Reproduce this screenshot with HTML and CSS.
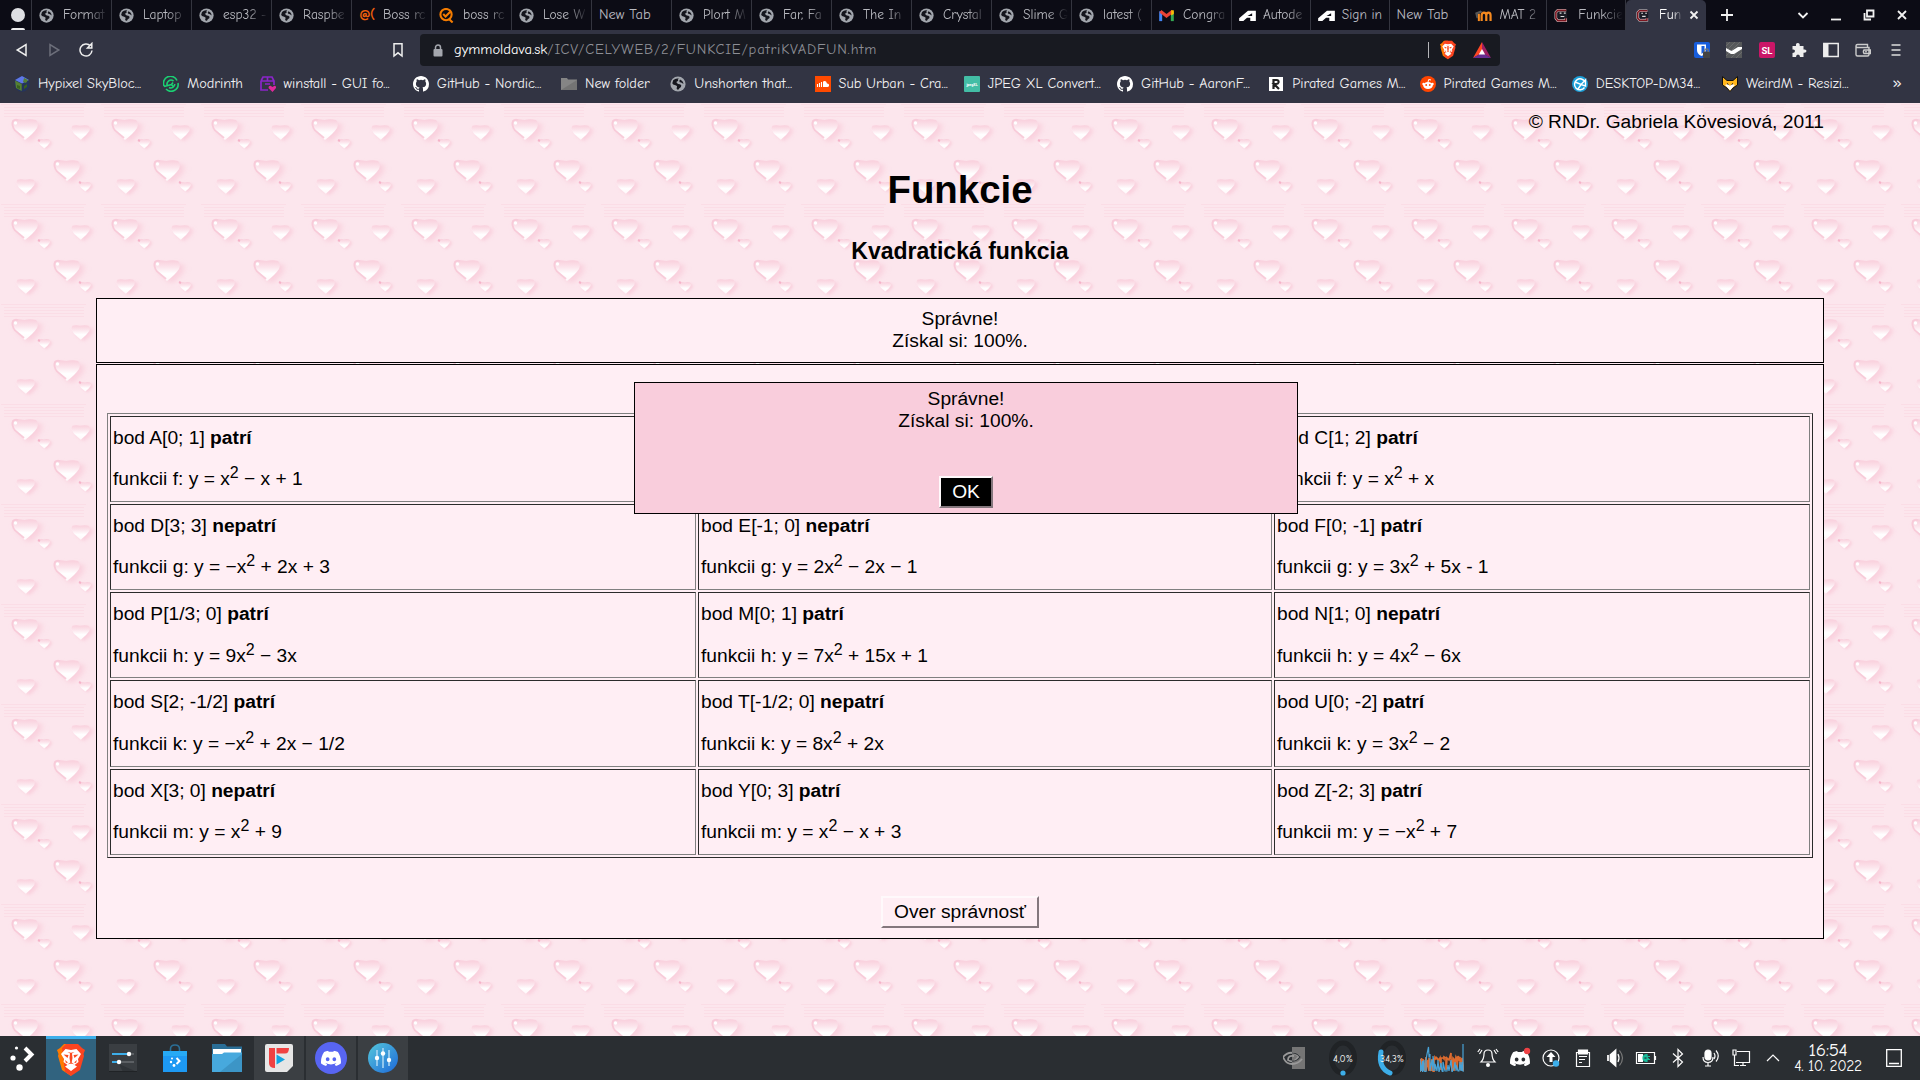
FILE: index.html
```html
<!DOCTYPE html>
<html lang="sk">
<head>
<meta charset="utf-8">
<title>Funkcie</title>
<link rel="stylesheet" href="styles.css">
</head>
<body>
<svg class="defs" width="0" height="0" aria-hidden="true">
  <symbol id="globe" viewBox="0 0 16 16"><circle cx="8" cy="8" r="7.600" fill="#a2a6ad"/><path d="M3.200 4.200Q5.500 2 8.800 2.600Q7 4 8.300 5Q6 5.200 6.800 7Q8.500 8.500 10 8.300Q12 9 11 11Q9 12 8.500 13.600Q6.800 14 6.500 12Q8 10 5.500 9.200Q2.500 8.600 2.300 7.200Z" fill="#15161e"/><path d="M10 3.400Q13.500 5 13.400 8Q11.500 6 9.800 6.200Q8.700 5 10 3.400Z" fill="#15161e"/></symbol>
  <symbol id="github" viewBox="0 0 16 16"><path fill="#fff" d="M8 0C3.580 0 0 3.580 0 8c0 3.540 2.290 6.530 5.470 7.590.4.070.55-.17.55-.38 0-.19-.01-.82-.01-1.490-2.010.37-2.530-.49-2.690-.94-.09-.23-.48-.94-.82-1.130-.28-.15-.68-.52-.01-.53.63-.01 1.080.58 1.230.82.72 1.210 1.870.87 2.330.66.070-.52.28-.87.51-1.070-1.780-.2-3.640-.89-3.640-3.950 0-.87.31-1.590.82-2.150-.08-.2-.36-1.020.08-2.120 0 0 .67-.21 2.200.82a7.600 7.600 0 0 1 4 0c1.530-1.040 2.200-.82 2.200-.82.44 1.100.16 1.920.08 2.120.51.56.82 1.270.82 2.150 0 3.070-1.870 3.750-3.650 3.950.29.25.54.73.54 1.480 0 1.070-.01 1.930-.01 2.200 0 .21.15.46.55.38A8.010 8.010 0 0 0 16 8c0-4.420-3.580-8-8-8z"/></symbol>
  <symbol id="autodesk" viewBox="0 0 18 14"><path fill="#fff" d="M0 13V10L9.500 2H18V13H12V9.500H8.500L4.500 13ZM9 7.500H14V4.500Z" fill-rule="evenodd"/></symbol>
  <symbol id="gym" viewBox="0 0 16 16"><path d="M13 2.500H4L2 4.500V11L4 13.500H12.500V10.500" fill="none" stroke="#d9cfcf" stroke-width="2.800"/><path d="M13 2.500H4L2 4.500V11L4 13.500H12.500V10.500" fill="none" stroke="#7c1620" stroke-width="1.700"/><rect x="4.500" y="4" width="9.500" height="7" fill="#1b1b24"/><path d="M6 5.500h2M10.500 5.500h2M7 9h4" stroke="#ddd" stroke-width="1.200"/></symbol>
  <symbol id="lion" viewBox="0 0 28 32"><path fill="#ff7a00" d="M7 0H14V32L5 26L1 12L1.500 10L0 6L3 4Z"/><path fill="#fb4420" d="M9 0H21L25 4L28 6L26.500 10L27 12L23 26L14 32L8 27.700L5 4Z"/><path fill="#fff" d="M8.500 5L14 6L19.500 5L24 10L21 15L21.500 18L17.500 21L20 22.500L14 27L8 22.500L10.500 21L6.500 18L7 15L4 10Z"/><path fill="#fb4a20" d="M6.500 10.500L11.500 11L10.500 14ZM21.500 10.500L16.500 11L17.500 14ZM10.500 8L13 9.500L12.500 14L13.300 18.500L10.500 20.500L12.800 19.700H15.200L17.500 20.500L14.700 18.500L15.500 14L15 9.500L17.500 8L14 8.800ZM8 16L11 18.500L9 19ZM20 16L17 18.500L19 19Z"/></symbol>
  <symbol id="discord" viewBox="0 0 24 18"><path fill="#fff" d="M20.300 1.500A20 20 0 0 0 15.400 0l-.6 1.300a18 18 0 0 0-5.600 0L8.600 0a20 20 0 0 0-4.900 1.500C.5 6.200-.3 10.800.1 15.300A20 20 0 0 0 6.100 18.300l1.300-2-2-.9.500-.4c3.900 1.800 8.200 1.800 12.100 0l.5.4-2 .9 1.300 2a20 20 0 0 0 6-3C24.400 10 23 5.500 20.300 1.500ZM8 12.500c-1.200 0-2.200-1.100-2.200-2.400S6.800 7.700 8 7.700s2.200 1.100 2.200 2.400-1 2.400-2.200 2.400Zm8 0c-1.200 0-2.200-1.100-2.200-2.400s1-2.400 2.200-2.400 2.200 1.100 2.200 2.400-1 2.400-2.200 2.400Z"/></symbol>
</svg>

<header class="browser">
  <nav class="tabs">
    <div class="pinned"><i></i><b></b></div>
    <div class="tab"><svg><use href="#globe"/></svg><span>Format</span></div>
    <div class="tab"><svg><use href="#globe"/></svg><span>Laptop</span></div>
    <div class="tab"><svg><use href="#globe"/></svg><span>esp32 -</span></div>
    <div class="tab"><svg><use href="#globe"/></svg><span>Raspbe</span></div>
    <div class="tab"><em>@(</em><span>Boss rc</span></div>
    <div class="tab"><svg viewBox="0 0 16 16"><circle cx="7.500" cy="7" r="6" fill="none" stroke="#f57c00" stroke-width="2.200"/><path d="M4.500 6.500L7 9L12 4M11 12L14.500 15.500" fill="none" stroke="#f57c00" stroke-width="2.200"/></svg><span>boss rc</span></div>
    <div class="tab"><svg><use href="#globe"/></svg><span>Lose W</span></div>
    <div class="tab plain"><span>New Tab</span></div>
    <div class="tab"><svg><use href="#globe"/></svg><span>Plort M</span></div>
    <div class="tab"><svg><use href="#globe"/></svg><span>Far, Fa</span></div>
    <div class="tab"><svg><use href="#globe"/></svg><span>The In</span></div>
    <div class="tab"><svg><use href="#globe"/></svg><span>Crystal</span></div>
    <div class="tab"><svg><use href="#globe"/></svg><span>Slime G</span></div>
    <div class="tab"><svg><use href="#globe"/></svg><span>latest (</span></div>
    <div class="tab"><svg viewBox="0 0 16 16"><path d="M1.800 14V3.500" stroke="#4285f4" stroke-width="3.200"/><path d="M14.200 14V3.500" stroke="#34a853" stroke-width="3.200"/><path d="M1.500 3.500L8 8.500L14.500 3.500" fill="none" stroke="#ea4335" stroke-width="3.400"/><path d="M13 2.500h2.800v4L13 8z" fill="#fbbc04"/></svg><span>Congra</span></div>
    <div class="tab narrow"><svg class="wide"><use href="#autodesk"/></svg><span>Autode</span></div>
    <div class="tab narrow"><svg class="wide"><use href="#autodesk"/></svg><span class="full">Sign in</span></div>
    <div class="tab narrow plain"><span>New Tab</span></div>
    <div class="tab narrow"><svg class="wide" viewBox="0 0 18 14"><path d="M7 13V7Q7 4 9.500 4T12 7V13M12 7Q12 4 14.300 4T16.600 7V13" fill="none" stroke="#f68a1f" stroke-width="2.400"/><path d="M4 13V5" fill="none" stroke="#f68a1f" stroke-width="2.200"/><path d="M0 4L6 1.500L8 3.500L3 5.500V10H1.500Z" fill="#555"/></svg><span>MAT 2</span></div>
    <div class="tab narrow"><svg><use href="#gym"/></svg><span>Funkcie</span></div>
    <div class="tab active"><svg><use href="#gym"/></svg><span>Fun</span><svg class="close" viewBox="0 0 10 10"><path d="M1.500 1.500L8.500 8.500M8.500 1.500L1.500 8.500"/></svg></div>
    <svg class="plus" viewBox="0 0 12 12"><path d="M6 0V12M0 6H12"/></svg>
    <div class="wincontrols">
      <svg viewBox="0 0 12 12"><path d="M1.500 4L6 8.500L10.500 4"/></svg>
      <svg viewBox="0 0 12 12"><path d="M1 10.500H11"/></svg>
      <svg viewBox="0 0 12 12"><path d="M4 1.500H10.500V7.500H4ZM1.500 4V10.500H8"/></svg>
      <svg viewBox="0 0 12 12"><path d="M2 2L10 10M10 2L2 10"/></svg>
    </div>
  </nav>

  <div class="toolbar">
    <div class="navbtns">
      <svg viewBox="0 0 16 16"><path d="M12 2.500V13.500L3.200 8Z"/></svg>
      <svg class="dim" viewBox="0 0 16 16"><path d="M4 2.500V13.500L12.800 8Z"/></svg>
      <svg viewBox="0 0 16 16"><path d="M12.500 4A6 6 0 1 0 14 8.500M13.800 1.500V6H9.500Z"/></svg>
    </div>
    <svg class="mark" viewBox="0 0 16 16"><path d="M4 1.800H12V14L8 10.800L4 14Z"/></svg>
    <div class="url">
      <svg class="lock" viewBox="0 0 10 13"><path d="M2.500 6V3.500a2.500 2.500 0 0 1 5 0V6" fill="none" stroke="#a4a7ae" stroke-width="1.500"/><rect x=".5" y="5" width="9" height="7.500" rx="1" fill="#a4a7ae"/></svg>
      <p class="address"><b>gymmoldava.sk</b><span>/ICV/CELYWEB/2/FUNKCIE/patriKVADFUN.htm</span></p>
      <i class="bar"></i>
      <svg class="shield"><use href="#lion"/></svg>
      <svg class="bat" viewBox="0 0 18 16"><path d="M9 0L0 16L9 11Z" fill="#ff4724"/><path d="M9 0L18 16L9 11Z" fill="#9e1f63"/><path d="M0 16H18L9 10.500Z" fill="#662d91"/><path d="M9 7L5.800 12.500H12.200Z" fill="#fff"/></svg>
    </div>
    <div class="ext">
      <svg viewBox="0 0 16 16"><rect width="16" height="16" rx="2" fill="#175ddc"/><path d="M3 2.500H12V8Q12 12 7.500 14Q3 12 3 8Z" fill="#fff"/><path d="M7.500 4H10.500V8Q10.500 10.500 7.500 12Z" fill="#175ddc"/><rect x="9" y="9.500" width="7" height="6.500" rx="1" fill="#444"/><path d="M10.800 10V8.500a1.700 1.700 0 0 1 3.400 0V10" fill="none" stroke="#777" stroke-width="1.300"/></svg>
      <svg viewBox="0 0 16 16"><rect width="16" height="16" fill="#56585a"/><path d="M0 4L4 0M0 9L9 0M0 14L14 0M5 16L16 5M10 16L16 10" stroke="#6a6b6c"/><path d="M0 6L5.500 9L12 5H16V7L8 12H5L0 9Z" fill="#fff"/></svg>
      <svg viewBox="0 0 16 16"><rect width="16" height="16" rx="2" fill="#cb1667"/><text x="8" y="12" class="sl">SL</text></svg>
      <svg viewBox="0 0 16 16"><path d="M1.500 4H5Q4.500 1 6.800 1T8.700 4H12.500V7.500Q15.500 7 15.500 9T12.500 10.700V15H9Q9 12.500 7 12.500T5 15H1.500V11Q4 11 4 9T1.500 7.500Z" fill="#eee"/></svg>
      <svg viewBox="0 0 16 16"><rect x=".8" y="1.500" width="14.400" height="13" fill="none" stroke="#eee" stroke-width="1.500"/><path d="M.8 1.500H5.500V14.500H.8Z" fill="#eee"/></svg>
      <svg viewBox="0 0 16 16"><path d="M1 3.500V12.500Q1 14 2.500 14H12.500Q14 14 14 12.500V5.500H2.500Q1 5.500 1 4T2.500 2.500H12.500V5M9 8H15.500V11.500H9Q7.800 9.800 9 8Z" fill="none" stroke="#ccc" stroke-width="1.400"/><circle cx="11" cy="9.700" r=".9" fill="#ccc"/></svg>
      <svg viewBox="0 0 16 16"><path d="M3.500 3H12.500M3.500 8H12.500M3.500 13H12.500" stroke="#ddd" stroke-width="1.600"/></svg>
    </div>
  </div>

  <nav class="bookmarks">
    <a class="w109"><svg viewBox="0 0 16 16"><circle cx="8" cy="8" r="7.700" fill="#25345c"/><path d="M1 4L8 0L15 4L8 7.500Z" fill="#5f78e8"/><path d="M1 4.500L7.700 8V15L2 12ZM10 2L14 4L12 7L9 6Z" fill="#557f34"/><path d="M3 9L6 10V13L3 12ZM10 10L13 8V11L10 13Z" fill="#39601e"/></svg><span>Hypixel SkyBloc...</span></a>
    <a class="w56"><svg viewBox="0 0 16 16"><path d="M1 10A7 7 0 0 1 14 4.500M15 7A7 7 0 0 1 3 13M4.500 10A4 4 0 0 1 10.500 5M11.800 8A4 4 0 0 1 6 11.500M1 10.500L8.500 8.500L10 6.500M8.500 8.500L10.500 11" fill="none" stroke="#1bd073" stroke-width="1.600"/></svg><span>Modrinth</span></a>
    <a class="w113"><svg viewBox="0 0 16 16"><path d="M1 5L3 1H12L14 5V9M1 5V14H8M1 5H14M7.500 1V5M5 8H10" fill="none" stroke="#8a25c9" stroke-width="1.700"/><path d="M12.500 16L8.500 12Q8.500 9.500 10.500 9.800L12.500 11L14.500 9.800Q16.500 10 16 12Z" fill="#e0299b"/></svg><span>winstall - GUI fo...</span></a>
    <a class="w108"><svg><use href="#github"/></svg><span>GitHub - Nordic...</span></a>
    <a class="w69"><svg viewBox="0 0 16 16"><path d="M0 2H6L7 3.500H16V14H0Z" fill="#858585"/><path d="M0 14L16 4V14Z" fill="#747474"/></svg><span>New folder</span></a>
    <a class="w104"><svg><use href="#globe"/></svg><span>Unshorten that...</span></a>
    <a class="w109"><svg viewBox="0 0 16 16"><rect width="16" height="16" fill="#ff4a00"/><path d="M2.500 8V11M4.500 7V11M6.500 6V11" stroke="#fff" stroke-width="1.100"/><path d="M8 5.500Q11 4 12 7.500Q14.500 7.500 14 10Q13.500 11 12.500 11H8Z" fill="#fff"/></svg><span>Sub Urban - Cra...</span></a>
    <a class="w113"><svg viewBox="0 0 16 16"><rect width="16" height="16" rx="1" fill="#43bda5"/><text x="8" y="9.500" class="jpg">jpegXL</text></svg><span>JPEG XL Convert...</span></a>
    <a class="w111"><svg><use href="#github"/></svg><span>GitHub - AaronF...</span></a>
    <a class="w111"><svg viewBox="0 0 16 16"><rect x="1" y="1" width="14" height="14" fill="#fff"/><path d="M5.500 13V4H8.500Q11 4 10.500 6.500Q10 8 8 8H6L11 13" fill="none" stroke="#222" stroke-width="2.200"/></svg><span>Pirated Games M...</span></a>
    <a class="w112"><svg viewBox="0 0 16 16"><circle cx="8" cy="8" r="8" fill="#ff4500"/><ellipse cx="8" cy="9.500" rx="4.800" ry="3.400" fill="#fff"/><circle cx="6.200" cy="9" r=".9" fill="#ff4500"/><circle cx="9.800" cy="9" r=".9" fill="#ff4500"/><path d="M8 6L8.700 3.500L11 4M6 11Q8 12 10 11" fill="none" stroke="#fff"/><circle cx="3.500" cy="8" r="1.200" fill="#fff"/><circle cx="12.500" cy="8" r="1.200" fill="#fff"/></svg><span>Pirated Games M...</span></a>
    <a class="w110"><svg viewBox="0 0 16 16"><circle cx="8" cy="8" r="8" fill="#1d9fd8"/><path d="M13 6A5.500 5.500 0 1 0 12.500 11.500M3 6L9 8.500L13.500 4V10L9 8.500L6 13" fill="none" stroke="#fff" stroke-width="1.400"/></svg><span>DESKTOP-DM34...</span></a>
    <a class="w108"><svg viewBox="0 0 16 16"><path d="M.5 .5L5 4.500H11L15.500 .5V9L11 12L8 15.500L5 12L.5 9Z" fill="#ffb61c" stroke="#111" stroke-width="1"/><path d="M3 9L6 8L8 10L10 8L13 9L8 14.500Z" fill="#fff"/><path d="M5 7.500L6.500 8.500M11 7.500L9.500 8.500" stroke="#111"/></svg><span>WeirdM - Resizi...</span></a>
    <a class="more">»</a>
  </nav>
</header>

<main class="page">
  <p class="copy">© RNDr. Gabriela Kövesiová, 2011</p>
  <h1>Funkcie</h1>
  <h2>Kvadratická funkcia</h2>
  <section class="result">Správne!<br>Získal si: 100%.</section>
  <section class="quiz">
    <table>
      <colgroup><col class="c1"><col class="c2"><col></colgroup>
      <tr>
        <td><p>bod A[0; 1] <b>patrí</b></p><p>funkcii f: y = x<sup>2</sup> − x + 1</p></td>
        <td></td>
        <td><p>bod C[1; 2] <b>patrí</b></p><p>funkcii f: y = x<sup>2</sup> + x</p></td>
      </tr>
      <tr>
        <td><p>bod D[3; 3] <b>nepatrí</b></p><p>funkcii g: y = −x<sup>2</sup> + 2x + 3</p></td>
        <td><p>bod E[-1; 0] <b>nepatrí</b></p><p>funkcii g: y = 2x<sup>2</sup> − 2x − 1</p></td>
        <td><p>bod F[0; -1] <b>patrí</b></p><p>funkcii g: y = 3x<sup>2</sup> + 5x - 1</p></td>
      </tr>
      <tr class="loose">
        <td><p>bod P[1/3; 0] <b>patrí</b></p><p>funkcii h: y = 9x<sup>2</sup> − 3x</p></td>
        <td><p>bod M[0; 1] <b>patrí</b></p><p>funkcii h: y = 7x<sup>2</sup> + 15x + 1</p></td>
        <td><p>bod N[1; 0] <b>nepatrí</b></p><p>funkcii h: y = 4x<sup>2</sup> − 6x</p></td>
      </tr>
      <tr class="loose tall">
        <td><p>bod S[2; -1/2] <b>patrí</b></p><p>funkcii k: y = −x<sup>2</sup> + 2x − 1/2</p></td>
        <td><p>bod T[-1/2; 0] <b>nepatrí</b></p><p>funkcii k: y = 8x<sup>2</sup> + 2x</p></td>
        <td><p>bod U[0; -2] <b>patrí</b></p><p>funkcii k: y = 3x<sup>2</sup> − 2</p></td>
      </tr>
      <tr>
        <td><p>bod X[3; 0] <b>nepatrí</b></p><p>funkcii m: y = x<sup>2</sup> + 9</p></td>
        <td><p>bod Y[0; 3] <b>patrí</b></p><p>funkcii m: y = x<sup>2</sup> − x + 3</p></td>
        <td><p>bod Z[-2; 3] <b>patrí</b></p><p>funkcii m: y = −x<sup>2</sup> + 7</p></td>
      </tr>
    </table>
    <button class="check">Over správnosť</button>
  </section>
  <div class="dialog">
    <p>Správne!<br>Získal si: 100%.</p>
    <button>OK</button>
  </div>
</main>

<footer class="taskbar">
  <div class="apps">
    <div class="launcher"><svg width="26" height="26" viewBox="0 0 26 26"><circle cx="7.500" cy="3" r="1.600" fill="#fff"/><circle cx="4" cy="13" r="2.600" fill="#fff"/><circle cx="10.500" cy="22.500" r="3.200" fill="#fff"/><path d="M16 3L22.500 9.500L16 16" fill="none" stroke="#fff" stroke-width="4"/></svg></div>
    <div class="app on"><svg width="28" height="32"><use href="#lion"/></svg></div>
    <div class="app"><svg width="28" height="28" viewBox="0 0 28 28"><rect width="28" height="28" fill="#3a3e42"/><path d="M10 20L28 28H14Z" fill="#2f3337"/><path d="M3 10H20M3 18H10" stroke="#3daee9" stroke-width="1.800"/><path d="M20 10H25M10 18H25" stroke="#5c6064" stroke-width="1.800"/><circle cx="20" cy="10" r="2.200" fill="#fff"/><circle cx="10" cy="18" r="2.200" fill="#fff"/><path d="M0 27.500H28" stroke="#202326"/></svg></div>
    <div class="app"><svg width="24" height="28" viewBox="0 0 24 28"><path d="M7.500 8V5Q7.500 1 12 1T16.500 5V8" fill="none" stroke="#2b6f96" stroke-width="1.600"/><rect y="7" width="24" height="21" fill="#1d99f3"/><path d="M0 7H24V12H0Z" fill="#27aaf5"/><circle cx="9" cy="14.500" r="1" fill="#fff"/><circle cx="8" cy="18" r="1.200" fill="#fff"/><circle cx="11" cy="21.500" r="1.400" fill="#fff"/><path d="M13.500 14L16.500 17L13.500 20" fill="none" stroke="#fff" stroke-width="2"/></svg></div>
    <div class="app"><svg width="30" height="28" viewBox="0 0 30 28"><path d="M0 0H13L15 2.500H30V20H0Z" fill="#2a6e96"/><path d="M1 5H29V14H1Z" fill="#fff"/><path d="M0 10H10L12 8.500H30V28H0Z" fill="#47a9dd"/><path d="M8 28L30 10V28Z" fill="#3c95c6"/></svg></div>
    <div class="app open"><svg width="28" height="28" viewBox="0 0 28 28"><path d="M2 0H26Q28 0 28 2V22L22 28H2Q0 28 0 26V2Q0 0 2 0Z" fill="#e6e6e6"/><path d="M4 4H10V24Q4 24 4 19ZM11.500 4H24Q24 9.500 20 9.500H11.500Z" fill="#f04242"/><path d="M11.500 10.500L20 15.500L11.500 20.500Z" fill="#14a4df"/></svg></div>
    <div class="app open"><svg width="32" height="32" viewBox="0 0 32 32"><circle cx="16" cy="16" r="16" fill="#5865f2"/><use href="#discord" x="6" y="8.500" width="20" height="15.500"/></svg></div>
    <div class="app open"><svg width="30" height="30" viewBox="0 0 30 30"><defs><linearGradient id="eq" x1="0" y1="0" x2="1" y2="1"><stop offset="0" stop-color="#55c8dc"/><stop offset="1" stop-color="#1d68d8"/></linearGradient></defs><circle cx="15" cy="15" r="15" fill="url(#eq)"/><path d="M9 7V23M15 5V25M21 7V23" stroke="#a9d5f2" stroke-width="1.600"/><circle cx="9" cy="15" r="2.200" fill="#fff"/><circle cx="15" cy="10.500" r="2.200" fill="#fff"/><circle cx="21" cy="17" r="2.200" fill="#fff"/></svg></div>
  </div>
  <div class="monitors">
    <svg class="nv" viewBox="0 0 22 22"><path d="M9 0H22V22H9Z" fill="#757575"/><path d="M0 10Q7 2 16 9Q11 17 5 13Q5 8 11 9M0 10Q3 17 9 17Q15 17 19 12" fill="none" stroke="#999" stroke-width="1.800"/><path d="M9 6Q14 6 17 10Q13 15 9 14" fill="none" stroke="#303437" stroke-width="1.200"/></svg>
    <svg class="gauge" viewBox="0 0 28 36"><ellipse cx="14" cy="18" rx="11.500" ry="15" fill="none" stroke="#202326" stroke-width="5"/><circle cx="14" cy="33" r="2.600" fill="#3daee9"/><text x="14" y="21.500">4,0%</text></svg>
    <svg class="gauge" viewBox="0 0 28 36"><ellipse cx="14" cy="18" rx="11.500" ry="15" fill="none" stroke="#202326" stroke-width="5"/><path d="M3 12Q0 28 12 33" fill="none" stroke="#3daee9" stroke-width="5" stroke-linecap="round"/><text x="14" y="21.500">34,3%</text></svg>
    <svg class="graph" viewBox="0 0 44 28"><path d="M0 28V15L1.500 27V14L3 26V15L4.500 27L6 13V27L8 16L9 27V14L11 27L12 15V26L14 28V14L15 16V13L17 15V14L19 16L20 14L21 26V14H23L24 15V13L26 14V26L27 15V14L29 16L31 9V14L32 27L33 14L34 15V27L36 13L37 15V26L38 12L39 15L40 13V26L42 14L44 27" fill="none" stroke="#dc6b2f" stroke-width="1.700"/><path d="M0 28V15L1 27L2.500 17V28L4 16V27L6 28V16L7 10L8.500 3L9 12L10 10V27L12 16L13 27V12L15 27V20L17 27L18 16L19 28L21 19L22 27L23 28V18L25 27H27L28 21L29 27L31 16L32 28L34 24L35 18L36 27V21L38 27H39L40 18L41 27L42 18V26L43 27V0" fill="none" stroke="#48a3d7" stroke-width="1.200"/></svg>
  </div>
  <div class="tray">
    <svg viewBox="0 0 22 22"><path d="M4 15Q7 12 7 7Q7 3 11 3T15 7Q15 12 18 15Z"/><circle cx="11" cy="18" r="2" fill="#fff" stroke="none"/><path d="M5 3L2.500 7M3 2L.8 5M17 3L19.500 7M19 2L21.200 5"/></svg>
    <svg viewBox="0 0 22 22"><use href="#discord" class="solid" x="1" y="4" width="20" height="15"/><circle cx="18" cy="4" r="3.200" fill="#ed4245" stroke="none"/></svg>
    <svg viewBox="0 0 22 22"><circle cx="11" cy="11" r="8"/><path d="M11 5L6.500 10H9.500V15H12.500V10H15.500Z" fill="#fff" stroke="none"/><circle cx="16" cy="16.500" r="3.200" fill="#3daee9" stroke="none"/></svg>
    <svg viewBox="0 0 22 22"><path d="M4.500 5.500H17.500V19.500H4.500ZM7 9.500H15M7 12.500H13M7 15.500H10"/><path d="M6.500 3H15.500V7H6.500Z" fill="#fff"/></svg>
    <svg viewBox="0 0 22 22"><path d="M4 8V14M6.500 8L11.500 3.500V18.500L6.500 14Z" fill="#fff" stroke-width="1.800"/><path d="M14 7Q16 11 14 15"/><path d="M15.500 3.500Q21.500 11 15.500 18.500" stroke="#777"/></svg>
    <svg viewBox="0 0 22 22"><path d="M1.500 5.500H19.500V16.500H1.500Z"/><path d="M20.500 9V13"/><path d="M3 7H8V15H3Z" fill="#fff" stroke="none"/><path d="M8 11Q8 7.500 12 7.500V9.500H15M12 9.500V12.500H15M12 12V14.500Q8 14.500 8 11" fill="#1abc9c" stroke="#1abc9c"/></svg>
    <svg viewBox="0 0 22 22"><path d="M6 6.500L15.500 15L11 19.500V2.500L15.500 7L6 15.500"/></svg>
    <svg viewBox="0 0 22 22"><rect x="6" y="3" width="6" height="10" rx="3" fill="#fff"/><path d="M4 10Q4 15.500 9 15.500T14 10M9 15.500V19M6 19H12M15 6Q17 9 15 12M17 3.500Q21.500 9 17 14.500"/></svg>
    <svg viewBox="0 0 22 22"><path d="M7 4.500H19.500V15.500H6M10 18.500H16M13 15.500V18.500M3 3H6V8H3ZM4.500 8V18.500H9"/></svg>
    <svg viewBox="0 0 22 22"><path d="M5 14L11 8L17 14"/></svg>
  </div>
  <div class="clock"><b>16:54</b><span>4. 10. 2022</span></div>
  <svg class="desk" viewBox="0 0 16 18"><path d="M.7 .7H15.300V17.300H.7ZM3 14.500H13" fill="none" stroke="#fff" stroke-width="1.300"/></svg>
</footer>
</body>
</html>
```
FILE: styles.css
```css
* { box-sizing: border-box; }
html, body { margin: 0; height: 100%; overflow: hidden; }
body { display: flex; flex-direction: column; width: 1920px; height: 1080px; font-family: "Liberation Sans", Arial, sans-serif; }
p, h1, h2 { margin: 0; }
svg { display: block; flex: none; }
.defs { position: absolute; }

/* Browser chrome */
.browser { flex: none; height: 103px; background: #323443; color: #f2f2f4; font: 14px/20px "Comic Neue", "Noto Sans", sans-serif; font-variant-ligatures: none; }
.tabs { display: flex; height: 30px; background: #0c0c15; color: #b9bac0; }
.pinned { width: 32px; padding: 8px 0 0 11px; border-right: 1px solid #34353f; }
.pinned i { display: block; width: 14px; height: 14px; border-radius: 50%; background: #dedfe3; }
.pinned b { display: block; width: 14px; height: 2px; margin-top: 6px; background: #eee; border-radius: 2px 2px 0 0; }
.tab { display: flex; align-items: center; width: 80px; padding-left: 7px; border-right: 1px solid #34353f; }
.tab.narrow { width: 78.800px; }
.tab svg { width: 15px; height: 15px; margin-right: 9px; }
.tab svg.wide { width: 17px; height: 13px; margin-right: 7px; }
.tab em { width: 15px; margin-right: 9px; color: #f2610c; font-style: normal; font-weight: 700; font-size: 14px; letter-spacing: -1px; white-space: nowrap; }
.tab span { width: 45px; white-space: nowrap; font-size: 13.500px; -webkit-mask-image: linear-gradient(90deg, #000 55%, transparent); mask-image: linear-gradient(90deg, #000 55%, transparent); }
.tab span.full { -webkit-mask-image: none; mask-image: none; }
.tab.plain span { width: 60px; font-size: 14.500px; -webkit-mask-image: none; mask-image: none; }
.tab.active { padding-left: 10px; background: #323443; border: 0; border-radius: 5px 5px 0 0; color: #fff; }
.tab.active span { width: 24px; }
.tab.active svg { width: 14px; }
.tab.active svg.close { width: 10px; height: 10px; margin: 0 0 0 6px; }
.close path, .plus path, .wincontrols path { fill: none; stroke: #f2f2f2; stroke-width: 1.800; }
.plus { width: 12px; height: 12px; margin: 9px 0 0 15px; }
.wincontrols { display: flex; gap: 21px; margin: 9px 12px 0 auto; }
.wincontrols svg { width: 12px; height: 12px; }

.toolbar { display: flex; align-items: center; height: 40px; }
.navbtns { display: flex; gap: 16px; padding-left: 14px; width: 390px; }
.navbtns svg, .mark { width: 16px; height: 16px; }
.navbtns path, .mark path { fill: none; stroke: #eee; stroke-width: 1.500; }
.navbtns .dim path { stroke: #6d6f7b; }
.url { display: flex; align-items: center; width: 1080px; height: 32px; margin-left: 14px; padding-left: 13px; border-radius: 4px; background: #181a21; }
.lock { width: 10px; height: 13px; }
.address { width: 970px; margin-left: 11px; font-size: 14.600px; white-space: nowrap; color: #8d8f96; }
.address b { font-weight: 400; color: #fff; }
.address span { letter-spacing: .8px; }
.bar { width: 1px; height: 16px; margin-left: 4px; background: #b5b5b8; }
.shield { width: 16px; height: 20px; margin-left: 11px; }
.bat { width: 18px; height: 16px; margin-left: 17px; }
.ext { display: flex; gap: 16.300px; margin-left: 194px; }
.ext svg { width: 16px; height: 16px; }
.sl { font: 700 9.500px Roboto, sans-serif; fill: #fff; text-anchor: middle; }
.jpg { font: 700 3.600px Roboto, sans-serif; fill: #fff; text-anchor: middle; }

.bookmarks { display: flex; align-items: center; gap: 16.250px; height: 28px; padding-left: 14px; }
.bookmarks a { display: flex; align-items: center; gap: 8px; font-size: 14.300px; white-space: nowrap; }
.bookmarks svg { width: 16px; height: 16px; }
.bookmarks .more { margin: -2px 18px 0 auto; font-size: 17px; }
.w56 span { width: 56px; }
.w69 span { width: 69px; }
.w104 span { width: 104px; }
.w108 span { width: 108px; }
.w109 span { width: 109px; }
.w110 span { width: 110px; }
.w111 span { width: 111px; }
.w112 span { width: 112px; }
.w113 span { width: 113px; }

/* Quiz page over the tiled heart wallpaper */
.page {
  position: relative; flex: none; height: 933px; padding: 8px 96px 0; overflow: hidden; color: #000; font-size: 19.200px; line-height: 22px;
  background: #fce6ed url("data:image/svg+xml,%3Csvg xmlns='http://www.w3.org/2000/svg' xmlns:xlink='http://www.w3.org/1999/xlink' width='100' height='100'%3E%3Cdefs%3E%3ClinearGradient id='g' x2='0' y2='1'%3E%3Cstop offset='0' stop-color='%23f9cfdc'/%3E%3Cstop offset='.35' stop-color='%23fce6ed'/%3E%3Cstop offset='.65' stop-color='%23fff'/%3E%3Cstop offset='1' stop-color='%23fff8fa'/%3E%3C/linearGradient%3E%3Cfilter id='b' x='-50%25' y='-50%25' width='200%25' height='200%25'%3E%3CfeGaussianBlur stdDeviation='3 2'/%3E%3C/filter%3E%3Cpath id='h' d='M14 21L4 12Q-1 5 2 1Q7 -.5 13 1Q20 -.5 25 1Q28 4 26 9Q22 15 14 21Z'/%3E%3Cg id='k'%3E%3Cuse xlink:href='%23h' x='4' y='3' fill='%23f8c6d6' opacity='.7' filter='url(%23b)'/%3E%3Cuse xlink:href='%23h' fill='url(%23g)'/%3E%3C/g%3E%3Cg id='l'%3E%3Cuse xlink:href='%23k'/%3E%3Cpath d='M13 19L4 11.500Q0 6 2 2Q4 0 7 1' fill='none' stroke='%23f8cbd9' stroke-width='1.800'/%3E%3Ccircle cx='4.500' cy='4' r='1.700' fill='%23fff'/%3E%3C/g%3E%3C/defs%3E%3Cpath d='M1 1.500H86M4 4.500H84M4 7.500H84M4 10.500H84M4 13.500H84' stroke='%23fbdde6' stroke-width='1'/%3E%3Cuse xlink:href='%23l' x='11' y='16'/%3E%3Cuse xlink:href='%23l' x='53' y='57'/%3E%3Cuse xlink:href='%23k' transform='translate(71 22) scale(.7)'/%3E%3Cuse xlink:href='%23k' transform='translate(16 76) scale(.7)'/%3E%3Cuse xlink:href='%23k' transform='translate(38 36) scale(.45)'/%3E%3Cuse xlink:href='%23k' transform='translate(79 79) scale(.45)'/%3E%3Cpath d='M38 37l2 1M79 79l2 1' stroke='%23f5b3c8' stroke-width='2'/%3E%3C/svg%3E") 0 0 / 100px 100px;
}
.copy { text-align: right; }
h1 { margin-top: 35px; font-size: 38.400px; line-height: 44px; text-align: center; }
h2 { margin-top: 26px; font-size: 23px; line-height: 26px; text-align: center; }
.result, .quiz { border: 1px solid #000; background: #ffeef4; text-align: center; }
.result { height: 65px; margin-top: 34px; padding-top: 9px; }
.quiz { height: 575px; margin-top: 1px; padding: 48px 10px 0; }
table { width: 100%; table-layout: fixed; border: 1px solid; border-color: #808080 #2b2b2b #2b2b2b #808080; border-collapse: separate; border-spacing: 2px; text-align: left; }
.c1 { width: 586px; }
.c2 { width: 574px; }
td { height: 86px; padding: 10px 1px 0 2px; border: 1px solid; border-color: #2b2b2b #808080 #808080 #2b2b2b; vertical-align: top; }
td p + p { margin-top: 19px; }
.loose td p + p { margin-top: 20px; }
.tall td { height: 87px; }
sup { font-size: 16px; line-height: 0; }
button { font: 19.200px/22px "Liberation Sans", Arial, sans-serif; padding: 0; border: 2px solid; border-color: #fff9fb #84777d #84777d #fff9fb; background: #ffeef4; color: #000; }
.check { width: 158px; height: 32px; margin-top: 38px; }
.dialog { position: absolute; left: 634px; top: 279px; width: 664px; height: 132px; padding-top: 5px; border: 1px solid #000; background: #f9cddc; text-align: center; }
.dialog button { width: 54px; height: 32px; margin-top: 44px; background: #000; color: #fff; }

/* Desktop panel */
.taskbar { display: flex; align-items: center; flex: none; height: 44px; background: #2a2e32; color: #fcfcfc; font-family: "Comic Neue", "Noto Sans", sans-serif; }
.apps { display: flex; height: 44px; }
.launcher { display: flex; align-items: center; width: 46px; padding-left: 9px; }
.app { display: flex; align-items: center; justify-content: center; width: 50px; height: 44px; margin-right: 2px; }
.app.on { background: #31637f; border-top: 3px solid #3daee9; }
.app.open { background: #3b3f43; }
.monitors { display: flex; align-items: center; margin-left: auto; }
.nv { width: 22px; height: 22px; margin-right: 24px; }
.gauge { width: 28px; height: 36px; margin-right: 21px; overflow: visible; }
.gauge + .gauge { margin-right: 14px; }
.gauge text { font: 10px "Comic Neue", "Noto Sans", sans-serif; fill: #fff; text-anchor: middle; }
.graph { width: 44px; height: 28px; }
.tray { display: flex; gap: 9.700px; margin-left: 13px; }
.tray svg { width: 22px; height: 22px; fill: none; stroke: #fcfcfc; stroke-width: 1.200; }
.tray .solid { stroke: none; }
.clock { display: flex; flex-direction: column; align-items: center; width: 72px; margin-left: 8px; font-size: 15.500px; line-height: 15px; white-space: nowrap; letter-spacing: -.4px; }
.clock b { font-weight: 400; font-size: 19px; line-height: 17px; }
.desk { width: 16px; height: 18px; margin: 0 18px 0 22px; }
```
